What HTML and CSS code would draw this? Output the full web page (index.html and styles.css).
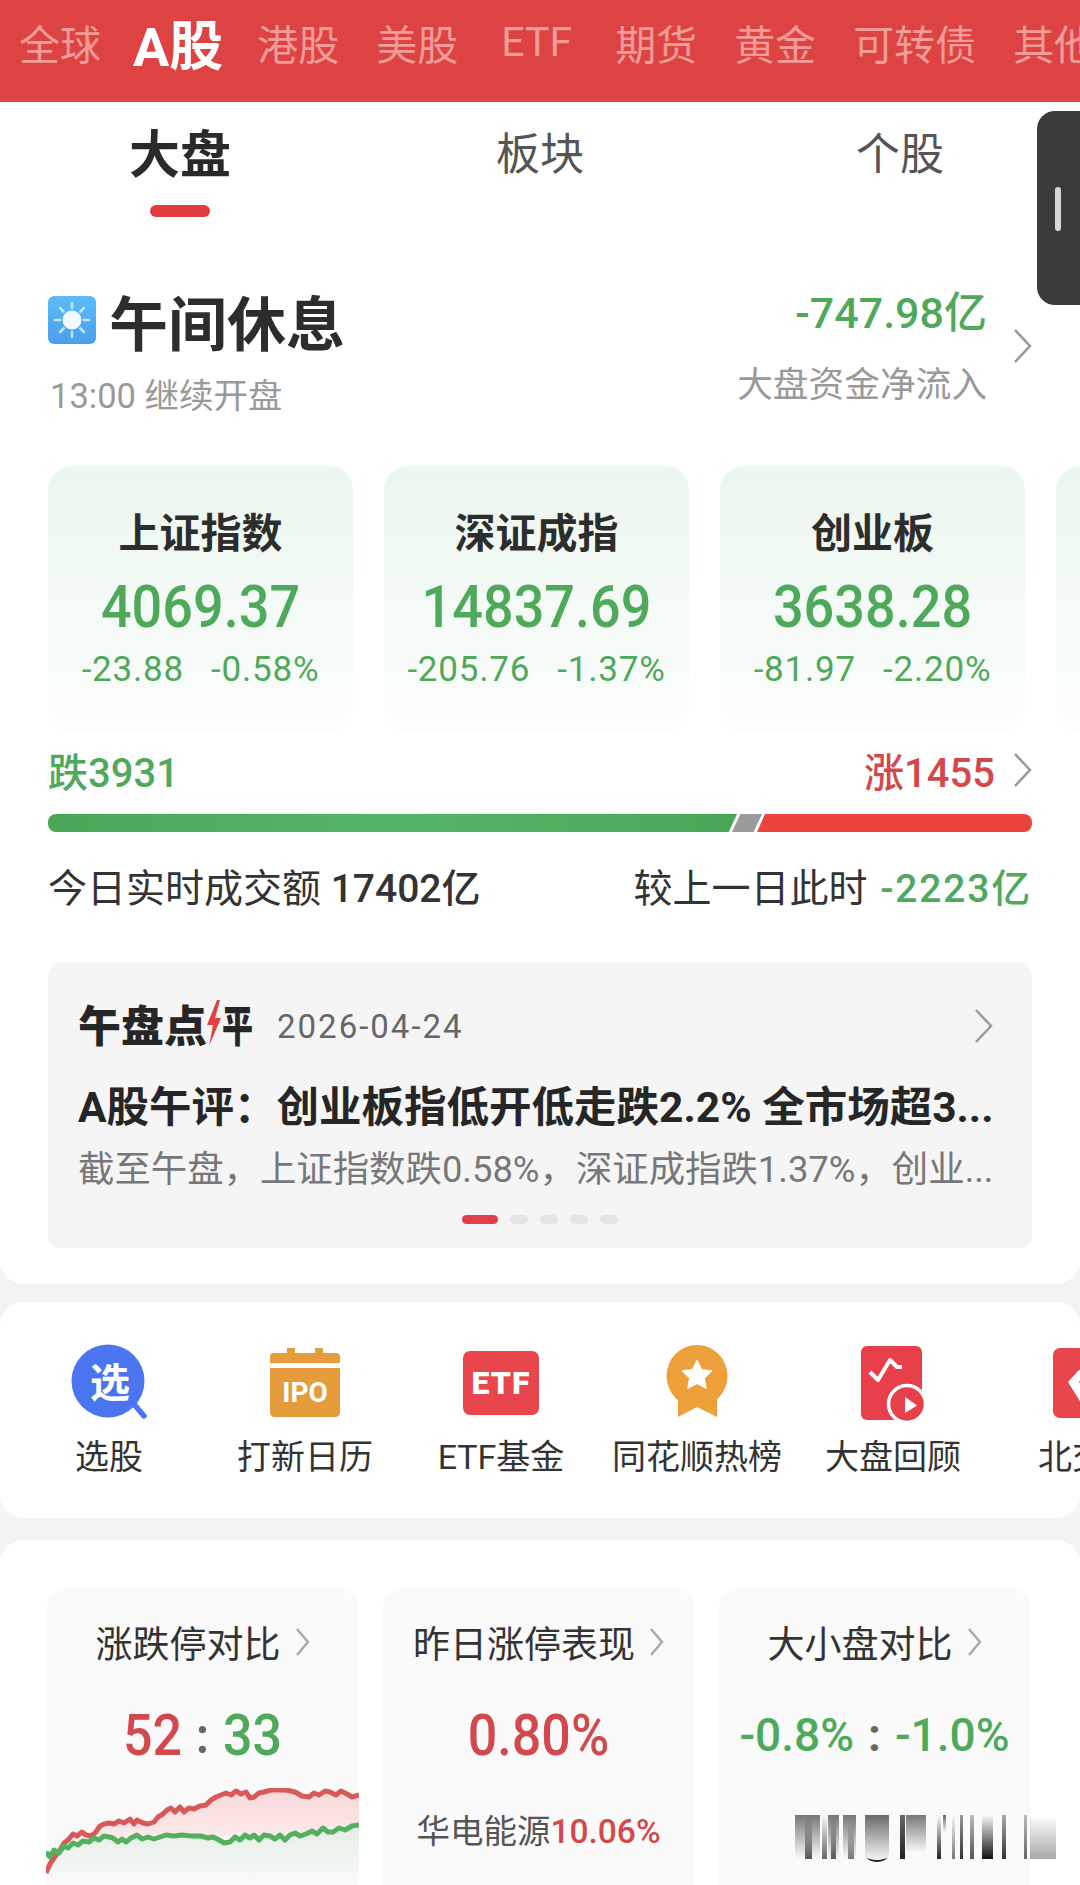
FILE: index.html
```html
<!DOCTYPE html>
<html lang="zh-CN">
<head>
    <meta charset="UTF-8">
    <title>A股 大盘</title>
    <link rel="stylesheet" href="styles.css">
</head>
<body>
<div class="page">
    <div class="market-nav">
        <span>全球</span>
        <span class="on">A股</span>
        <span>港股</span>
        <span>美股</span>
        <span class="latin">ETF</span>
        <span>期货</span>
        <span>黄金</span>
        <span>可转债</span>
        <span>其他</span>
    </div>

    <div class="handle"><i></i></div>

    <section class="panel panel-main">
        <div class="tabs">
            <div class="tab on">大盘<i></i></div>
            <div class="tab">板块</div>
            <div class="tab">个股</div>
        </div>

        <div class="status">
            <div class="status-left">
                <div class="status-title">
                    <svg class="sun" viewBox="0 0 48 48">
                        <defs>
                            <linearGradient id="sky" x1="0" y1="0" x2="0" y2="1">
                                <stop offset="0" stop-color="#5dbcf7"/>
                                <stop offset="1" stop-color="#4a9eea"/>
                            </linearGradient>
                        </defs>
                        <rect width="48" height="48" rx="6" fill="url(#sky)"/>
                        <circle cx="24" cy="24" r="9.500" fill="#f2f9fe"/>
                        <g stroke="#bfe6fb" stroke-width="2.600" stroke-linecap="round">
                            <path d="M24 7v5M24 36v5M7 24h5M36 24h5M12 12l3.500 3.500M32.500 32.500L36 36M12 36l3.500-3.500M32.500 15.500L36 12"/>
                        </g>
                    </svg>
                    <span>午间休息</span>
                </div>
                <div class="status-sub">13:00 继续开盘</div>
            </div>
            <div class="status-right">
                <div>
                    <div class="flow green">-747.98亿</div>
                    <div class="flow-label">大盘资金净流入</div>
                </div>
                <svg class="chev" viewBox="0 0 19 34"><path d="M2 1l15 16L2 33"/></svg>
            </div>
        </div>

        <div class="index-row">
            <div class="index-card">
                <div class="index-name">上证指数</div>
                <div class="index-val">4069.37</div>
                <div class="index-chg"><span>-23.88</span><span>-0.58%</span></div>
            </div>
            <div class="index-card">
                <div class="index-name">深证成指</div>
                <div class="index-val">14837.69</div>
                <div class="index-chg"><span>-205.76</span><span>-1.37%</span></div>
            </div>
            <div class="index-card">
                <div class="index-name">创业板</div>
                <div class="index-val">3638.28</div>
                <div class="index-chg"><span>-81.97</span><span>-2.20%</span></div>
            </div>
            <div class="index-card"></div>
        </div>

        <div class="breadth">
            <span class="green">跌3931</span>
            <div class="breadth-right">
                <span class="red">涨1455</span>
                <svg class="chev" viewBox="0 0 19 34"><path d="M2 1l15 16L2 33"/></svg>
            </div>
        </div>
        <div class="ratio-bar">
            <div class="seg-down"></div>
            <div class="seg-flat"></div>
            <div class="seg-up"></div>
        </div>

        <div class="turnover">
            <div>今日实时成交额 <b>17402亿</b></div>
            <div>较上一日此时 <b class="green">-2223亿</b></div>
        </div>

        <div class="news">
            <div class="news-head">
                <div class="news-logo">午盘点<svg class="bolt" viewBox="0 0 16 46"><path d="M11 0L1 25h6L3 46l12-28H9l5-18z"/></svg><span class="ping">平</span></div>
                <div class="news-date">2026-04-24</div>
                <svg class="chev" viewBox="0 0 19 34"><path d="M2 1l15 16L2 33"/></svg>
            </div>
            <div class="news-title">A股午评：创业板指低开低走跌2.2% 全市场超3...</div>
            <div class="news-desc">截至午盘，上证指数跌0.58%，深证成指跌1.37%，创业...</div>
            <div class="dots"><i class="on"></i><i></i><i></i><i></i><i></i></div>
        </div>
    </section>

    <section class="panel panel-tools">
        <div class="tool">
            <svg class="tool-icon" viewBox="0 0 80 80">
                <path d="M64 60l11 13" stroke="#4b75f0" stroke-width="5.500" stroke-linecap="round"/>
                <circle cx="39" cy="38" r="36.500" fill="#4b75f0"/>
                <text x="41" y="54" class="svg-word" font-size="40">选</text>
            </svg>
            <span>选股</span>
        </div>
        <div class="tool">
            <svg class="tool-icon" viewBox="0 0 80 80">
                <path d="M5 14q0-4 4-4h13V5h8v5h20V5h8v5h13q4 0 4 4v6H5z" fill="#e69c3a"/>
                <path d="M5 25h70v44q0 5-5 5H10q-5 0-5-5z" fill="#e69c3a"/>
                <text x="40" y="59" class="svg-word" font-size="28">IPO</text>
            </svg>
            <span>打新日历</span>
        </div>
        <div class="tool">
            <svg class="tool-icon" viewBox="0 0 80 80">
                <rect x="2" y="8" width="76" height="64" rx="7" fill="#e8464c"/>
                <text x="40" y="51" class="svg-word word-wide" font-size="32">ETF</text>
            </svg>
            <span>ETF基金</span>
        </div>
        <div class="tool">
            <svg class="tool-icon" viewBox="0 0 80 80">
                <path d="M21 50v24l19-10 20 10V50z" fill="#eda03a"/>
                <ellipse cx="40" cy="33" rx="30.500" ry="31" fill="#eda03a"/>
                <path d="M40 17l4.600 9.500 10.400 1.400-7.600 7.200 1.900 10.400L40 40.600 30.700 45.500l1.900-10.400-7.600-7.200 10.400-1.400z" fill="#fff" stroke="#fff" stroke-linejoin="round"/>
            </svg>
            <span>同花顺热榜</span>
        </div>
        <div class="tool">
            <svg class="tool-icon" viewBox="0 0 80 80">
                <rect x="8" y="3" width="61" height="74" rx="6" fill="#e8404a"/>
                <path d="M17 29l8 8 12-20 7 7h5" fill="none" stroke="#fff" stroke-width="4" stroke-linejoin="round"/>
                <circle cx="54" cy="61" r="18.500" fill="#e8404a" stroke="#fff" stroke-width="3.500"/>
                <path d="M52 54l12 8.500L52 70z" fill="#fff"/>
            </svg>
            <span>大盘回顾</span>
        </div>
        <div class="tool">
            <svg class="tool-icon" viewBox="0 0 80 80">
                <rect x="4" y="5" width="76" height="70" rx="7" fill="#e8464c"/>
                <path d="M19 39l11-12h12v36l-8 0z" fill="#fff"/>
                <path d="M30 39h12" stroke="#555" stroke-width="1"/>
            </svg>
            <span>北交所</span>
        </div>
    </section>

    <section class="panel panel-stats">
        <div class="stat">
            <div class="stat-title">涨跌停对比<svg class="chev-sm" viewBox="0 0 15 28"><path d="M2 1l11 13L2 27"/></svg></div>
            <div class="stat-big"><span class="red">52</span><em>:</em><span class="green">33</span></div>
            <svg class="limit-chart" viewBox="0 0 313 97" preserveAspectRatio="none">
                <defs>
                    <linearGradient id="redArea" x1="0" y1="0" x2="0" y2="1">
                        <stop offset="0" stop-color="#f9d9d9"/>
                        <stop offset="0.600" stop-color="#fbeaea"/>
                    </linearGradient>
                    <linearGradient id="greenArea" x1="0" y1="0" x2="0" y2="1">
                        <stop offset="0" stop-color="#e4ede5"/>
                        <stop offset="1" stop-color="#fafafa"/>
                    </linearGradient>
                </defs>
                <path d="M0 85L8 70 22 52 36 44 49 45 63 35 91 32 108 34 125 20 160 17 180 5 208 9 225 2 249 4 263 9 284 4 313 7V37L277 40 249 45 208 47 167 49 136 47 91 47 67 50 43 54 22 59z" fill="url(#redArea)"/>
                <path d="M0 64L22 59 43 54 67 50 80 54 91 47 108 50 136 47 167 49 184 54 208 47 229 49 239 52 249 45 277 40 287 44 313 37V97H0z" fill="url(#greenArea)"/>
                <path class="line-red" d="M0 85L4 76 8 70 14 62 18 55 22 52 27 46 31 48 36 44 40 47 45 48 49 45 54 38 58 36 63 35 68 36 73 33 78 35 84 31 88 36 91 32 97 35 102 36 108 34 112 29 117 26 121 22 125 20 129 24 134 19 138 24 143 20 148 21 154 18 160 17 165 12 170 9 175 7 180 5 185 7 190 3 195 6 200 4 204 10 208 9 213 5 218 4 225 2 232 2 240 2 249 4 256 8 263 9 268 5 273 7 279 3 284 4 290 7 295 3 301 6 306 9 313 7"/>
                <path class="line-green" d="M0 64L4 69 8 62 13 65 18 58 22 60 27 55 32 57 37 53 43 54 48 50 53 52 58 48 63 49 67 50 72 54 76 51 80 54 85 50 91 47 96 51 102 49 108 51 114 49 120 47 128 48 136 47 145 48 155 48 162 50 167 49 173 52 178 55 184 54 189 49 194 52 199 47 204 50 208 47 213 52 218 47 224 48 229 51 234 47 239 52 244 47 249 45 254 48 260 46 266 43 271 46 277 40 282 44 287 44 293 40 299 42 306 38 313 37"/>
            </svg>
        </div>
        <div class="stat">
            <div class="stat-title">昨日涨停表现<svg class="chev-sm" viewBox="0 0 15 28"><path d="M2 1l11 13L2 27"/></svg></div>
            <div class="stat-big red">0.80%</div>
            <div class="stat-foot">华电能源<span class="red">10.06%</span></div>
        </div>
        <div class="stat">
            <div class="stat-title">大小盘对比<svg class="chev-sm" viewBox="0 0 15 28"><path d="M2 1l11 13L2 27"/></svg></div>
            <div class="stat-big stat-mid"><span class="green">-0.8%</span><em>:</em><span class="green">-1.0%</span></div>
        </div>
        <div class="glitch"></div>
    </section>
</div>
</body>
</html>
```

FILE: styles.css
```css
* {
    box-sizing: border-box;
}
html, body {
    margin: 0;
    padding: 0;
}
body {
    background: #f4f4f4;
    font-family: Roboto, "Noto Sans CJK SC", sans-serif;
    color: #333;
}
.page {
    position: relative;
    width: 1080px;
    height: 1885px;
    overflow: hidden;
}
.green { color: #4fa95b; }
.red { color: #d2484c; }

/* top market nav */
.market-nav {
    display: flex;
    align-items: center;
    gap: 37px;
    height: 102px;
    padding: 0 0 18px 19px;
    background: #dd4343;
    color: #f29b98;
    font-size: 41px;
    white-space: nowrap;
}
.market-nav span {
    flex: none;
}
.market-nav .latin {
    margin: 0 6px;
}
.market-nav .on {
    margin: 0 -3px 0 -5px;
    color: #fff;
    font-size: 54px;
    font-weight: 700;
}

/* floating handle on the right edge */
.handle {
    position: absolute;
    top: 111px;
    right: -20px;
    width: 63px;
    height: 194px;
    border-radius: 18px;
    background: #3b3b3d;
    z-index: 5;
}
.handle i {
    position: absolute;
    top: 76px;
    left: 18px;
    width: 6px;
    height: 44px;
    border-radius: 3px;
    background: #d8d8d8;
}

.panel {
    background: #fff;
    border-radius: 24px;
}
.panel-main {
    height: 1182px;
    padding: 0 48px;
    border-radius: 0 0 24px 24px;
    overflow: hidden;
}

/* 大盘 板块 个股 */
.tabs {
    display: flex;
    height: 115px;
    margin-left: -48px;
    color: #555;
    font-size: 44px;
}
.tab {
    position: relative;
    flex: none;
    width: 360px;
    padding-top: 21px;
    line-height: 64px;
    text-align: center;
}
.tab.on {
    padding-top: 22px;
    color: #2a2a2a;
    font-size: 51px;
    font-weight: 700;
}
.tab.on i {
    position: absolute;
    left: 150px;
    top: 103px;
    width: 60px;
    height: 12px;
    border-radius: 6px;
    background: #e23c40;
}

/* status row */
.status {
    display: flex;
    justify-content: space-between;
    height: 249px;
    padding-top: 68px;
}
.status-title {
    display: flex;
    align-items: center;
    gap: 13px;
    height: 70px;
    color: #2d2d2d;
    font-size: 59px;
    font-weight: 700;
}
.sun {
    width: 48px;
    height: 48px;
}
.status-sub {
    margin-top: 20px;
    padding-left: 2px;
    color: #999;
    font-size: 34.500px;
    line-height: 42px;
}
.status-right {
    display: flex;
    align-items: center;
    gap: 26px;
    height: 130px;
    margin-top: -4px;
    text-align: right;
}
.flow {
    font-size: 43px;
    font-weight: 500;
    line-height: 56px;
}
.flow-label {
    margin-top: 21px;
    color: #999;
    font-size: 35.700px;
    line-height: 46px;
}
.chev {
    flex: none;
    width: 19px;
    height: 34px;
    fill: none;
    stroke: #999;
    stroke-width: 2.500;
}

/* index cards, the fourth runs off the edge */
.index-row {
    display: flex;
    gap: 31px;
    width: 1100px;
}
.index-card {
    flex: none;
    width: 305px;
    height: 267px;
    border-radius: 24px;
    background: linear-gradient(#ebf7ee, #f7fbf8 70%, #fcfefc);
    text-align: center;
}
.index-name {
    padding-top: 41px;
    color: #2d2d2d;
    font-size: 41px;
    font-weight: 700;
    line-height: 54px;
}
.index-val {
    margin-top: 13px;
    color: #4fa95b;
    font-size: 54px;
    font-weight: 500;
    line-height: 66px;
    transform: scaleY(1.100);
}
.index-chg {
    display: flex;
    justify-content: center;
    gap: 27px;
    margin-top: 9px;
    color: #4fa95b;
    font-size: 35px;
    letter-spacing: 0.800px;
    line-height: 42px;
}

/* advance/decline */
.breadth {
    display: flex;
    justify-content: space-between;
    align-items: center;
    height: 50px;
    margin-top: 12px;
    font-size: 40px;
    font-weight: 500;
}
.breadth-right {
    display: flex;
    align-items: center;
    gap: 18px;
}
.ratio-bar {
    display: flex;
    height: 18px;
    margin-top: 19px;
    border-radius: 8px;
    overflow: hidden;
}
.seg-down {
    width: 689px;
    background: linear-gradient(90deg, #4ba658, #55b566 50%, #4ba658);
    clip-path: polygon(0 0, 100% 0, 98.800% 100%, 0 100%);
}
.seg-flat {
    width: 30px;
    margin-left: -5px;
    background: #9b9b9b;
    clip-path: polygon(28% 0, 100% 0, 72% 100%, 0 100%);
}
.seg-up {
    flex: 1;
    margin-left: -5px;
    background: #ea443d;
    clip-path: polygon(8px 0, 100% 0, 100% 100%, 0 100%);
}
.turnover {
    display: flex;
    justify-content: space-between;
    margin-top: 32px;
    color: #333;
    font-size: 39px;
    line-height: 50px;
}
.turnover b {
    font-weight: 500;
}
.turnover .green {
    margin-left: 3px;
    letter-spacing: 1.800px;
}

/* 午盘点评 */
.news {
    height: 285px;
    margin-top: 49px;
    padding: 36px 30px 0;
    border-radius: 12px;
    background: #f5f5f5;
}
.news-head {
    display: flex;
    align-items: center;
    height: 54px;
    padding-right: 9px;
}
.news-logo {
    display: flex;
    align-items: center;
    flex: none;
    width: 199px;
    padding-bottom: 6px;
    color: #262626;
    font-size: 43px;
    font-weight: 900;
    white-space: nowrap;
}
.bolt {
    flex: none;
    width: 16px;
    height: 46px;
    margin-left: -1px;
    fill: #e2403f;
}
.ping {
    display: inline-block;
    width: 28px;
    transform: scaleX(0.720);
    transform-origin: left;
}
.news-date {
    flex: 1;
    color: #666;
    font-size: 33px;
    letter-spacing: 2px;
}
.news-title {
    margin-top: 28px;
    color: #262626;
    font-size: 42.500px;
    font-weight: 700;
    line-height: 54px;
    white-space: nowrap;
}
.news-desc {
    margin-top: 10px;
    color: #777;
    font-size: 36.400px;
    line-height: 50px;
    white-space: nowrap;
}
.dots {
    display: flex;
    justify-content: center;
    gap: 12px;
    margin-top: 20px;
}
.dots i {
    width: 18px;
    height: 9px;
    border-radius: 5px;
    background: #e4e4e4;
}
.dots .on {
    width: 36px;
    background: #e0404a;
}

/* tool shortcuts */
.panel-tools {
    display: flex;
    height: 216px;
    margin-top: 18px;
    padding: 41px 0 0 11px;
}
.tool {
    display: flex;
    flex: none;
    flex-direction: column;
    align-items: center;
    width: 196px;
    font-size: 34px;
    white-space: nowrap;
}
.tool-icon {
    flex: none;
    width: 80px;
    height: 80px;
}
.tool span {
    margin-top: 10px;
    line-height: 48px;
}
.svg-word {
    fill: #fff;
    font-family: Roboto, "Noto Sans CJK SC", sans-serif;
    font-weight: 700;
    text-anchor: middle;
}
.word-wide {
    font-weight: 900;
    letter-spacing: 1px;
}

/* stat cards */
.panel-stats {
    position: relative;
    display: flex;
    gap: 23px;
    height: 400px;
    margin-top: 22px;
    padding: 47px 0 0 46px;
}
.stat {
    flex: none;
    width: 313px;
    height: 400px;
    border-radius: 24px;
    background: #fafafa;
    overflow: hidden;
    text-align: center;
}
.stat-title {
    display: flex;
    justify-content: center;
    align-items: center;
    gap: 14px;
    height: 52px;
    margin-top: 29px;
    color: #333;
    font-size: 37px;
}
.chev-sm {
    flex: none;
    width: 15px;
    height: 28px;
    fill: none;
    stroke: #aaa;
    stroke-width: 2.500;
}
.stat-big {
    display: flex;
    justify-content: center;
    align-items: center;
    gap: 14px;
    height: 70px;
    margin-top: 32px;
    font-size: 52px;
    font-weight: 500;
    transform: scaleY(1.100);
}
.stat-big em {
    color: #666;
    font-style: normal;
    font-size: 46px;
    font-weight: 700;
}
.stat-mid {
    gap: 14px;
    font-size: 46px;
    transform: none;
}
.limit-chart {
    display: block;
    width: 313px;
    height: 97px;
    margin-top: 18px;
}
.line-red, .line-green {
    fill: none;
    stroke-width: 5;
    stroke-linejoin: round;
}
.line-red { stroke: #d9595b; }
.line-green { stroke: #53b060; }
.stat-foot {
    margin-top: 36px;
    color: #555;
    font-size: 33.500px;
    line-height: 52px;
}
.stat-foot .red {
    font-weight: 500;
}

/* smeared stripes lying over the third card */
.glitch {
    position: absolute;
    left: 795px;
    top: 275px;
    width: 262px;
    height: 44px;
    background-repeat: no-repeat;
    background-image:
        linear-gradient(rgba(80, 80, 80, 0), #555),
        linear-gradient(rgba(80, 80, 80, 0), #666),
        linear-gradient(rgba(80, 80, 80, 0), #555),
        linear-gradient(rgba(80, 80, 80, 0), #777),
        linear-gradient(#777, rgba(120, 120, 120, 0)),
        linear-gradient(#777, rgba(120, 120, 120, 0)),
        linear-gradient(#777, rgba(120, 120, 120, 0)),
        linear-gradient(#6a6a6a, rgba(120, 120, 120, 0.050)),
        linear-gradient(#666, #222),
        linear-gradient(#777, rgba(120, 120, 120, 0) 85%),
        linear-gradient(rgba(40, 40, 40, 0), #222),
        linear-gradient(#666, rgba(90, 90, 90, 0) 40%),
        linear-gradient(rgba(90, 90, 90, 0), #777),
        linear-gradient(#999, #333),
        linear-gradient(#bbb, #555),
        linear-gradient(rgba(20, 20, 20, 0), #111),
        linear-gradient(#aaa, #333),
        linear-gradient(#bbb, #666),
        linear-gradient(rgba(140, 140, 140, 0), #aaa);
    background-size:
        7px 100%, 5px 100%, 5px 100%, 6px 100%,
        25px 100%, 11px 100%, 13px 100%, 24px 100%,
        5px 100%, 20px 100%, 4px 100%, 3px 100%,
        3px 100%, 3px 100%, 4px 100%, 11px 100%,
        4px 100%, 3px 100%, 26px 100%;
    background-position:
        10px 0, 27px 0, 36px 0, 53px 0,
        0 0, 33px 0, 48px 0, 70px 0,
        105px 0, 111px 0, 142px 0, 148px 0,
        157px 0, 165px 0, 175px 0, 187px 0,
        207px 0, 229px 0, 235px 0;
}
.glitch::after {
    content: "";
    position: absolute;
    left: 72px;
    bottom: -3px;
    width: 20px;
    height: 8px;
    border-bottom: 2px solid #222;
    border-radius: 50%;
}
```
